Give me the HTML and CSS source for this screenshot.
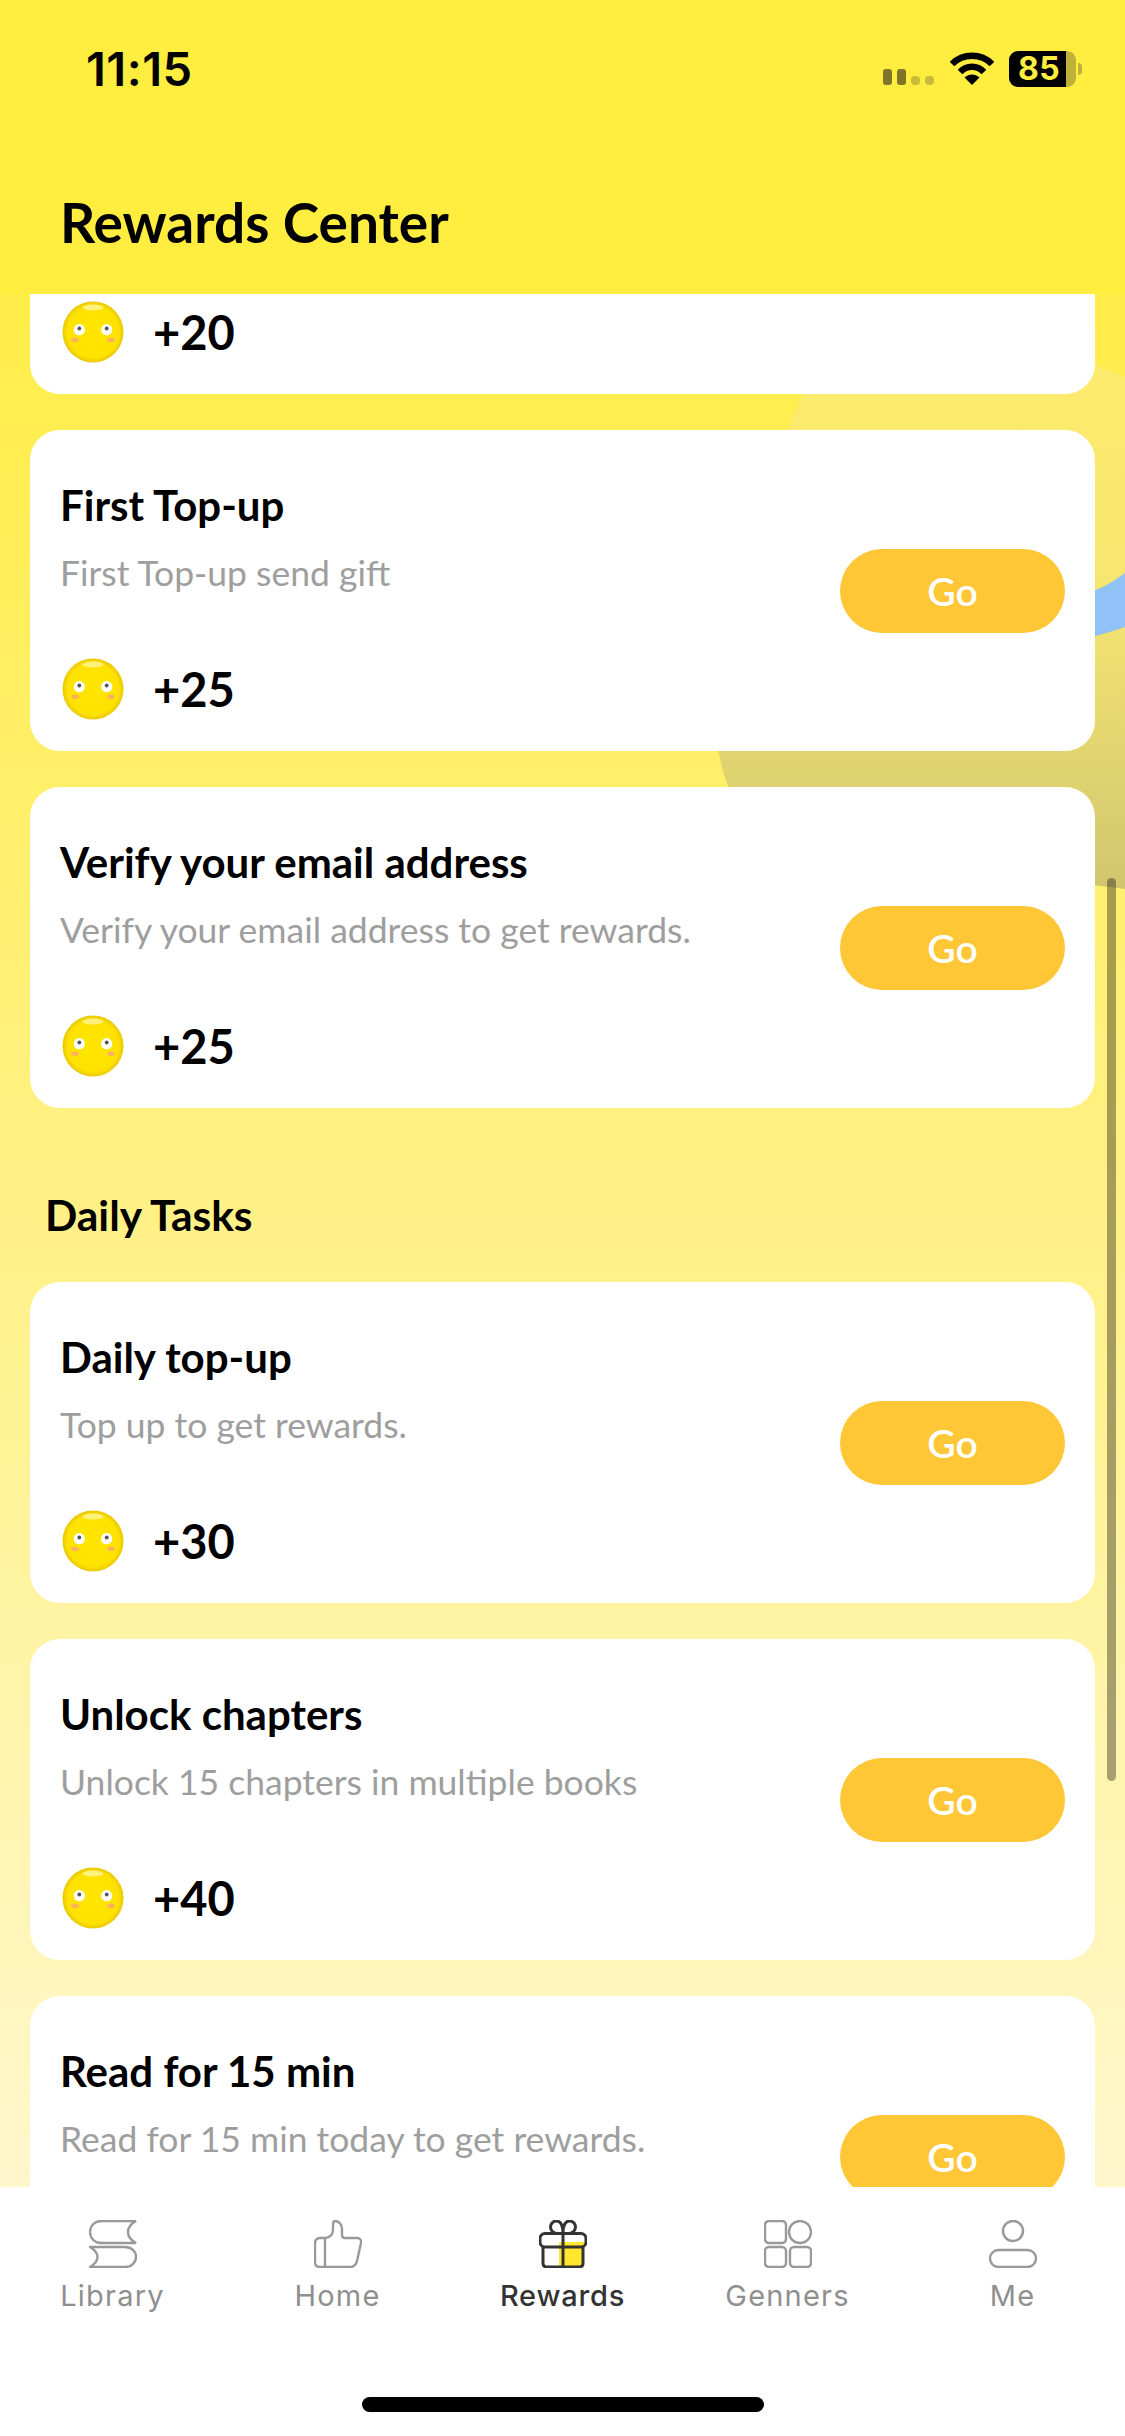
FILE: index.html
```html
<!DOCTYPE html>
<html lang="en">
<head>
<meta charset="utf-8">
<title>Rewards Center</title>
<link rel="stylesheet" href="styles.css">
</head>
<body>
<svg class="defs" width="0" height="0" aria-hidden="true">
  <defs>
    <radialGradient id="coinFill" cx="50%" cy="50%" r="50%">
      <stop offset="0%" stop-color="#ffe600"/>
      <stop offset="84%" stop-color="#ffe200"/>
      <stop offset="100%" stop-color="#e9c700"/>
    </radialGradient>
    <symbol id="coin" viewBox="0 0 62 62">
      <circle cx="31" cy="31" r="30.5" fill="url(#coinFill)"/>
      <ellipse cx="31" cy="6.5" rx="10.5" ry="3" fill="#fff27a"/>
      <ellipse cx="13" cy="38.700" rx="3.800" ry="2.300" fill="#fbb25a"/>
      <ellipse cx="49" cy="38.700" rx="3.800" ry="2.300" fill="#fbb25a"/>
      <circle cx="17.300" cy="28.700" r="5.600" fill="#fff"/>
      <circle cx="44.700" cy="28.700" r="5.600" fill="#fff"/>
      <circle cx="17.300" cy="27.500" r="1.900" fill="#555"/>
      <circle cx="44.700" cy="27.500" r="1.900" fill="#555"/>
    </symbol>
  </defs>
</svg>
<div class="app">
  <header class="header">
    <div class="status">
      <span class="time">11:15</span>
      <div class="status-icons">
        <div class="signal">
          <span class="bar"></span><span class="bar"></span><span class="dot"></span><span class="dot"></span>
        </div>
        <svg class="wifi" viewBox="0 0 46 33" width="46" height="33">
          <path d="M3 12C14 1 32 1 43 12" fill="none" stroke="#000" stroke-width="6.5"/>
          <path d="M11 20C18 13 28 13 35 20" fill="none" stroke="#000" stroke-width="6.5"/>
          <path d="M23 33L15.500 25.500C20 21.500 26 21.500 30.500 25.500Z" fill="#000"/>
        </svg>
        <div class="battery">
          <div class="battery-body">
            <span class="battery-level">85</span>
          </div>
          <span class="battery-nub"></span>
        </div>
      </div>
    </div>
    <h1 class="page-title">Rewards Center</h1>
  </header>

  <main class="scroll">
    <svg class="decor" viewBox="0 0 1125 1894" width="1125" height="1894" aria-hidden="true">
      <defs>
        <linearGradient id="blob" x1="0" y1="0" x2="0" y2="1">
          <stop offset="0%" stop-color="#fdec6c"/>
          <stop offset="45%" stop-color="#f6e670"/>
          <stop offset="75%" stop-color="#e2d570"/>
          <stop offset="100%" stop-color="#d2c570"/>
        </linearGradient>
      </defs>
      <path d="M1125 83C1000 26 850 26 803 99C770 190 700 340 718 456C722 475 725 484 728 492C766 566 980 576 1125 595Z" fill="url(#blob)"/>
      <path d="M1085 299C1100 296 1113 288 1125 279V333C1113 337 1100 341 1085 345Z" fill="#90c2f8"/>
    </svg>
    <div class="list">
      <section class="card card-clipped">
        <div class="reward">
          <svg class="coin"><use href="#coin"/></svg>
          <span class="points">+20</span>
        </div>
      </section>

      <section class="card">
        <div class="card-text">
          <h2 class="card-title">First Top-up</h2>
          <p class="card-sub">First Top-up send gift</p>
          <div class="reward reward-spaced">
            <svg class="coin"><use href="#coin"/></svg>
            <span class="points">+25</span>
          </div>
        </div>
        <button class="go">Go</button>
      </section>

      <section class="card">
        <div class="card-text">
          <h2 class="card-title">Verify your email address</h2>
          <p class="card-sub">Verify your email address to get rewards.</p>
          <div class="reward reward-spaced">
            <svg class="coin"><use href="#coin"/></svg>
            <span class="points">+25</span>
          </div>
        </div>
        <button class="go">Go</button>
      </section>

      <h2 class="section-title">Daily Tasks</h2>

      <section class="card">
        <div class="card-text">
          <h2 class="card-title">Daily top-up</h2>
          <p class="card-sub">Top up to get rewards.</p>
          <div class="reward reward-spaced">
            <svg class="coin"><use href="#coin"/></svg>
            <span class="points">+30</span>
          </div>
        </div>
        <button class="go">Go</button>
      </section>

      <section class="card">
        <div class="card-text">
          <h2 class="card-title">Unlock chapters</h2>
          <p class="card-sub">Unlock 15 chapters in multiple books</p>
          <div class="reward reward-spaced">
            <svg class="coin"><use href="#coin"/></svg>
            <span class="points">+40</span>
          </div>
        </div>
        <button class="go">Go</button>
      </section>

      <section class="card">
        <div class="card-text">
          <h2 class="card-title">Read for 15 min</h2>
          <p class="card-sub">Read for 15 min today to get rewards.</p>
        </div>
        <button class="go">Go</button>
      </section>
    </div>
    <div class="scrollbar"></div>
  </main>

  <nav class="tabbar">
    <div class="tabs">
      <div class="tab">
        <svg class="tab-icon" viewBox="0 0 48 48">
          <path d="M47 1H12C5.500 1 1 6 1 12C1 18 5.500 23 12 23H47C41.500 20 39 16.500 39 12C39 7.500 41.500 4 47 1Z"/>
          <path d="M1 27H36C42.500 27 47 31.500 47 37C47 42.500 42.500 47 36 47H1C6 44 8.500 41 8.500 37C8.500 33 6 30 1 27Z"/>
        </svg>
        <span class="tab-label">Library</span>
      </div>
      <div class="tab">
        <svg class="tab-icon" viewBox="0 0 48 48">
          <path d="M11 18H6C3 18 1 20 1 23V42C1 45 3 47 6 47H36C40 47 42 45 43 41L47 23C47.500 20 46 18 43 18H31C29 18 28 16.500 28 15V9C28 4 24.500 1 21 1C19 1 19 3 19 5V10C19 15 15 18 11 18Z"/>
          <path d="M11 18V47"/>
        </svg>
        <span class="tab-label">Home</span>
      </div>
      <div class="tab tab-active">
        <svg class="tab-icon" viewBox="0 0 48 48">
          <rect class="gift-fill" x="20" y="22" width="25" height="25"/>
          <path d="M4 27V43C4 45.500 5.500 47 8 47H40C42.500 47 44 45.500 44 43V27"/>
          <rect x="1" y="13.500" width="46" height="13.500" rx="5"/>
          <path d="M24 13.500V47"/>
          <path d="M24 13.500H19C14.500 13.500 11.500 10.500 11.500 7C11.500 3.500 14.500 1 17.500 1C21.500 1 24 5 24 13.500C24 5 26.500 1 30.500 1C33.500 1 36.500 3.500 36.500 7C36.500 10.500 33.500 13.500 29 13.500H24Z"/>
        </svg>
        <span class="tab-label">Rewards</span>
      </div>
      <div class="tab">
        <svg class="tab-icon" viewBox="0 0 48 48">
          <rect x="1" y="1" width="21" height="22" rx="4"/>
          <circle cx="36" cy="12" r="11"/>
          <rect x="1" y="27" width="21" height="20" rx="4"/>
          <rect x="26" y="27" width="21" height="20" rx="4"/>
        </svg>
        <span class="tab-label">Genners</span>
      </div>
      <div class="tab">
        <svg class="tab-icon" viewBox="0 0 48 48">
          <circle cx="24" cy="11" r="10"/>
          <rect x="1" y="30" width="46" height="17" rx="8.500"/>
        </svg>
        <span class="tab-label">Me</span>
      </div>
    </div>
    <div class="home-indicator"></div>
  </nav>
</div>
</body>
</html>
```

FILE: styles.css
```css
* {
  box-sizing: border-box;
}

html,
body {
  margin: 0;
  padding: 0;
}

.defs {
  position: absolute;
}

.app {
  width: 1125px;
  height: 2436px;
  display: flex;
  flex-direction: column;
  overflow: hidden;
  font-family: "Lato", "Liberation Sans", sans-serif;
  color: #000;
  background: #fff;
}

/* Header */
.header {
  flex: 0 0 294px;
  background: #ffed40;
  display: flex;
  flex-direction: column;
}

.status {
  height: 190px;
  padding: 45px 43px 0 86px;
  display: flex;
  justify-content: space-between;
  align-items: flex-start;
}

.time {
  font-family: "Inter", "Liberation Sans", sans-serif;
  font-weight: 600;
  font-size: 47px;
  line-height: 48px;
  letter-spacing: 0.5px;
}

.status-icons {
  display: flex;
  align-items: flex-end;
  gap: 14px;
  margin-top: 6px;
}

.signal {
  display: flex;
  align-items: flex-end;
  gap: 5px;
  margin-right: 1px;
  margin-bottom: 2px;
}

.bar {
  width: 9px;
  height: 16px;
  border-radius: 3px;
  background: #7f7428;
}

.dot {
  width: 9px;
  height: 9px;
  border-radius: 4px;
  background: #c9ba39;
}

.wifi {
  display: block;
  margin-bottom: 2px;
}

.battery {
  display: flex;
  align-items: center;
  gap: 2px;
}

.battery-body {
  width: 67px;
  height: 36px;
  border-radius: 9px;
  background: #bfb03a;
}

.battery-level {
  display: block;
  width: 57px;
  height: 36px;
  padding-left: 9px;
  border-radius: 9px 0 0 9px;
  background: #000;
  color: #ffed40;
  font-family: "Inter", "Liberation Sans", sans-serif;
  font-weight: 700;
  font-size: 32px;
  line-height: 36px;
  letter-spacing: 0.5px;
}

.battery-nub {
  width: 4px;
  height: 12px;
  border-radius: 0 6px 6px 0;
  background: #bfb03a;
}

.page-title {
  margin: 0;
  padding-left: 60px;
  font-size: 55px;
  font-weight: 700;
  line-height: 65px;
}

/* Scrolling content */
.scroll {
  position: relative;
  flex: 1 1 auto;
  min-height: 0;
  overflow: hidden;
  background: linear-gradient(180deg, #ffed48 0%, #fff188 50%, #fff7cc 100%);
}

.decor {
  position: absolute;
  left: 0;
  top: 0;
  display: block;
}

.list {
  position: relative;
  display: flex;
  flex-direction: column;
  gap: 36px;
  padding: 0 30px;
}

.card {
  flex: 0 0 auto;
  height: 321px;
  padding: 0 30px;
  display: flex;
  align-items: center;
  justify-content: space-between;
  background: #fff;
  border-radius: 30px;
}

.card-clipped {
  height: 100px;
  border-radius: 0 0 30px 30px;
  align-items: flex-start;
  padding-top: 7px;
}

.card-text {
  display: flex;
  flex-direction: column;
  align-self: flex-start;
  padding-top: 51px;
}

.card-title {
  margin: 0;
  font-size: 42px;
  font-weight: 700;
  line-height: 48px;
}

.card-sub {
  margin: 22px 0 0;
  font-size: 35.500px;
  font-weight: 400;
  line-height: 44px;
  color: #9e9e9e;
}

.reward {
  display: flex;
  align-items: center;
  gap: 29px;
}

.reward-spaced {
  margin-top: 63px;
}

.coin {
  display: block;
  flex: 0 0 62px;
  width: 62px;
  height: 62px;
  margin-left: 2px;
}

.points {
  font-size: 47px;
  font-weight: 700;
  line-height: 56px;
}

.go {
  flex: 0 0 225px;
  width: 225px;
  height: 84px;
  border: 0;
  padding: 0;
  border-radius: 42px;
  background: #ffc636;
  color: #fff;
  font-family: inherit;
  font-size: 39px;
  font-weight: 600;
  line-height: 84px;
}

.section-title {
  margin: 0 0 0 15px;
  height: 102px;
  padding-top: 46px;
  font-size: 42.500px;
  font-weight: 700;
  line-height: 50px;
}

.scrollbar {
  position: absolute;
  left: 1107px;
  top: 584px;
  width: 9px;
  height: 903px;
  border-radius: 5px;
  background: rgba(0, 0, 0, 0.35);
}

/* Tab bar */
.tabbar {
  flex: 0 0 249px;
  position: relative;
  z-index: 1;
  background: #fff;
  padding-top: 33px;
}

.tabs {
  display: grid;
  grid-template-columns: repeat(5, 225px);
}

.tab {
  display: flex;
  flex-direction: column;
  align-items: center;
  color: #8f8f8f;
}

.tab-active {
  color: #333;
}

.tab-icon {
  display: block;
  width: 48px;
  height: 48px;
  fill: none;
  stroke: #999;
  stroke-width: 2.400;
}

.tab-active .tab-icon {
  stroke: #333;
  stroke-width: 3;
}

.gift-fill {
  fill: #ffe72e;
  stroke: none;
}

.tab-label {
  margin-top: 10px;
  font-family: "Inter", "Liberation Sans", sans-serif;
  font-size: 29px;
  font-weight: 400;
  line-height: 36px;
  letter-spacing: 1.200px;
}

.tab-active .tab-label {
  font-weight: 500;
  letter-spacing: 0.800px;
}

.home-indicator {
  position: absolute;
  left: 362px;
  top: 210px;
  width: 402px;
  height: 15px;
  border-radius: 8px;
  background: #000;
}
```
